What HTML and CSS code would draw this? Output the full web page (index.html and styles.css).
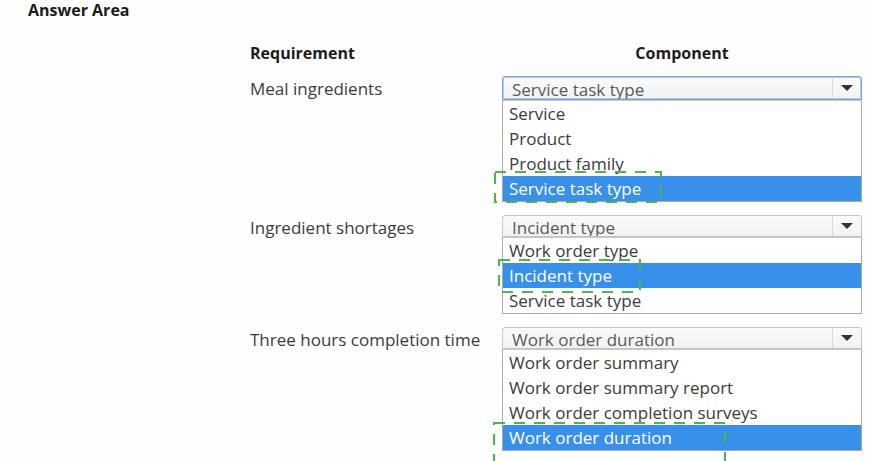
FILE: index.html
```html
<!DOCTYPE html>
<html lang="en">
<head>
<meta charset="utf-8">
<title>Answer Area</title>
<link rel="stylesheet" href="styles.css">
</head>
<body>
<div class="page">
  <h1 class="title">Answer Area</h1>
  <div class="table">
    <div class="th">Requirement</div>
    <div class="th th-comp">Component</div>

    <div class="label">Meal ingredients</div>
    <div class="dd">
      <div class="dd-box dd-focus"><span class="dd-value">Service task type</span><span class="dd-arrow"><span class="tri"></span></span></div>
      <ul class="dd-list">
        <li>Service</li>
        <li>Product</li>
        <li>Product family</li>
        <li class="sel">Service task type</li>
      </ul>
      <svg class="mark mark1" width="168" height="32"><rect x="1" y="1" width="166" height="30" fill="none" stroke="#52b152" stroke-width="2.2" stroke-dasharray="11 9"/></svg>
    </div>

    <div class="label">Ingredient shortages</div>
    <div class="dd">
      <div class="dd-box"><span class="dd-value">Incident type</span><span class="dd-arrow"><span class="tri"></span></span></div>
      <ul class="dd-list">
        <li>Work order type</li>
        <li class="sel">Incident type</li>
        <li>Service task type</li>
      </ul>
      <svg class="mark mark2" width="143" height="34"><rect x="1" y="1" width="141" height="32" fill="none" stroke="#52b152" stroke-width="2.2" stroke-dasharray="11 9"/></svg>
    </div>

    <div class="label">Three hours completion time</div>
    <div class="dd">
      <div class="dd-box"><span class="dd-value">Work order duration</span><span class="dd-arrow"><span class="tri"></span></span></div>
      <ul class="dd-list">
        <li>Work order summary</li>
        <li>Work order summary report</li>
        <li>Work order completion surveys</li>
        <li class="sel">Work order duration</li>
      </ul>
      <svg class="mark mark3" width="233" height="52"><rect x="1" y="1" width="231" height="50" fill="none" stroke="#52b152" stroke-width="2.2" stroke-dasharray="11 9"/></svg>
    </div>
  </div>
</div>
</body>
</html>
```
FILE: styles.css
```css
html, body {
  margin: 0;
  padding: 0;
  overflow: hidden;
  background: #fefefe;
}
body {
  font-family: "Open Sans", "DejaVu Sans", sans-serif;
  color: #3a3a3a;
}
.page {
  width: 872px;
  height: 461px;
}
.title {
  margin: 0 0 0 28px;
  font-size: 16px;
  line-height: 20px;
  font-weight: 700;
  color: #1c1c1c;
}
.table {
  display: grid;
  grid-template-columns: 252px 360px;
  row-gap: 13px;
  margin: 23px 0 0 250px;
  align-items: start;
}
.th {
  font-size: 16px;
  line-height: 20px;
  font-weight: 700;
  color: #1c1c1c;
}
.th-comp {
  text-align: center;
}
.label {
  font-size: 17px;
  line-height: 24px;
  color: #3d3a40;
  padding-top: 1px;
}
.dd {
  position: relative;
  width: 360px;
}
.dd-box {
  display: flex;
  height: 22px;
  box-sizing: border-box;
  border: 1px solid #c4c4c4;
  border-radius: 3px 3px 0 0;
  background: linear-gradient(#fbfbfb, #f1f1f1);
  overflow: hidden;
}
.dd-focus {
  height: 24px;
  border: 1px solid #7e9fd2;
  box-shadow: inset 0 0 0 1px #b7c9e8;
}
.dd-value {
  flex: 1;
  padding: 0 0 0 9px;
  font-size: 17px;
  line-height: 23px;
  color: #5a5a5a;
  white-space: nowrap;
}
.dd-focus .dd-value {
  line-height: 25px;
}
.dd-arrow {
  width: 28px;
  border-left: 1px solid #dadada;
  display: flex;
  align-items: center;
  justify-content: center;
}
.tri {
  width: 0;
  height: 0;
  border-left: 6px solid transparent;
  border-right: 6px solid transparent;
  border-top: 6px solid #333;
}
.dd-list {
  list-style: none;
  margin: 0;
  padding: 0;
  border: 1px solid #a9a9a9;
  border-top-color: #c8c8c8;
  background: #fff;
}
.dd-list li {
  height: 25px;
  padding-left: 6px;
  font-size: 17px;
  line-height: 25px;
  color: #3b3b3b;
  white-space: nowrap;
}
.dd-list li.sel {
  background: #3990ea;
  color: #fff;
}
.mark {
  position: absolute;
  display: block;
}
.mark1 {
  left: -8px;
  top: 95px;
}
.mark2 {
  left: -4px;
  top: 44px;
}
.mark3 {
  left: -9px;
  top: 95px;
}
```
